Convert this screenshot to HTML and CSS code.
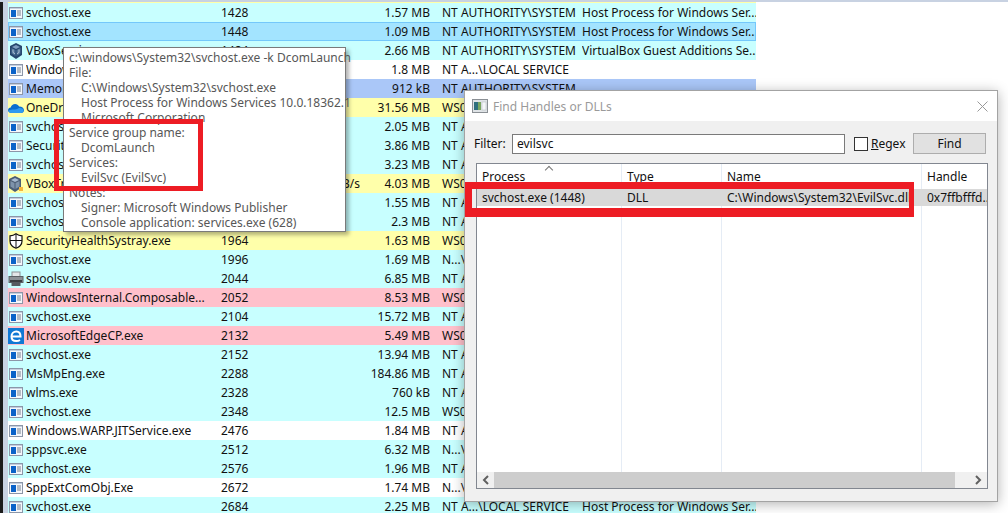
FILE: index.html
```html
<!DOCTYPE html>
<html>
<head>
  <title>Process Hacker</title>
  <link rel="stylesheet" href="styles.css">
</head>
<body>
  <svg class="defs" width="0" height="0">
    <symbol id="i-exe" viewBox="0 0 16 16">
      <rect x="1.5" y="2.5" width="13" height="11" fill="#f5f7fb" stroke="#8c96a8"/>
      <rect x="2" y="3" width="12" height="1" fill="#c3cede"/>
      <rect x="3" y="5" width="5" height="7" fill="#0b62c8"/>
      <path d="M9 6h4M9 8h4M9 10h4" stroke="#76818f"/>
    </symbol>
    <symbol id="i-vbox" viewBox="0 0 16 16">
      <path d="M8 0l6 3v9l-6 4-6-4V3z" fill="#27476f"/>
      <path d="M8 2l4 2-4 2-4-2z" fill="#7f9dbf"/>
      <path d="M3.500 5l4 2v6l-4-2.500zM12.500 5l-4 2v6l4-2.500z" fill="#4d7196"/>
      <path d="M5 6.500v3l2 1.200M11 6.500v3l-2 1.200" stroke="#c9d6e4" fill="none" stroke-width=".8"/>
    </symbol>
    <symbol id="i-tray" viewBox="0 0 16 16">
      <path d="M7 0l6 3v9l-6 4-6-4V3z" fill="#4b5d74"/>
      <path d="M7 2l4 2-4 2-4-2z" fill="#a7bad0"/>
      <path d="M2.500 5l4 2v6l-4-2.500zM11.500 5l-4 2v6l4-2.500z" fill="#7e93ab"/>
      <path d="M11 11h4v4h-4z" fill="#f6b73c"/>
    </symbol>
    <symbol id="i-cloud" viewBox="0 0 16 16">
      <path d="M3.500 13C1.500 13 0 11.800 0 10.200 0 8.700 1.200 7.600 2.700 7.500 3.300 5.300 5 4 7.100 4c1.800 0 3.200.9 4 2.400C13.800 6.300 16 8 16 10.300 16 11.900 14.800 13 13.200 13z" fill="#0a6fd0"/>
      <path d="M3.500 13C1.500 13 .5 11.800.5 10.500 4 9 8 10 10 8.500c2-1 5-.5 5.500 2C15.500 12 14.500 13 13.200 13z" fill="#2f9af0"/>
    </symbol>
    <symbol id="i-shield" viewBox="0 0 16 16">
      <path d="M8 .8c1.800 1.300 3.800 2 6 2.100v5c0 3.300-2.400 5.900-6 7.300-3.600-1.400-6-4-6-7.300v-5C4.200 2.800 6.200 2.100 8 .8z" fill="#fff" stroke="#111" stroke-width="1.200"/>
      <path d="M8 1v14M2 7.500h12" stroke="#111"/>
    </symbol>
    <symbol id="i-printer" viewBox="0 0 16 16">
      <rect x="4" y="1" width="8" height="5" fill="#e4e6e8" stroke="#8b8f94"/>
      <rect x="1" y="5.500" width="14" height="6" fill="#8d9196" stroke="#5c6064"/>
      <rect x="2" y="9" width="12" height="2" fill="#3a3d40"/>
      <rect x="3.500" y="11" width="9" height="4" fill="#555a5f"/>
    </symbol>
    <symbol id="i-edge" viewBox="0 0 16 16">
      <rect width="16" height="16" fill="#0f78d4"/>
      <path d="M4 8.500h8.500C12.500 5.500 10.800 3.500 8.300 3.500 5.500 3.500 3.500 5.800 3.500 8.500c0 2.700 2 4.500 4.800 4.500 1.500 0 2.800-.4 3.700-1" fill="none" stroke="#fff" stroke-width="2"/>
    </symbol>
    <symbol id="i-app" viewBox="0 0 16 16">
      <rect x=".5" y="1.500" width="15" height="13" fill="#dfe3e6" stroke="#8a8f94"/>
      <rect x="2" y="4" width="4" height="8" fill="#2f6f7d"/>
      <rect x="6" y="4" width="3" height="8" fill="#79a65f"/>
      <rect x="10" y="4" width="4" height="8" fill="#f4f6f8" stroke="#b0b6bc" stroke-width=".5"/>
    </symbol>
  </svg>

  <div class="topline"></div>
  <div class="page">
    <div class="gutter"></div>
    <div class="tree">
      <div class="sliver"></div>
      <div class="row service"><svg class="ico"><use href="#i-exe"/></svg><span>svchost.exe</span><span>1428</span><span class="num"></span><span class="num">1.57 MB</span><span class="user">NT AUTHORITY\SYSTEM</span><span>Host Process for Windows Ser...</span></div>
      <div class="row selected"><svg class="ico"><use href="#i-exe"/></svg><span>svchost.exe</span><span>1448</span><span class="num"></span><span class="num">1.09 MB</span><span class="user">NT AUTHORITY\SYSTEM</span><span>Host Process for Windows Ser...</span></div>
      <div class="row service"><svg class="ico"><use href="#i-vbox"/></svg><span>VBoxService.exe</span><span>1484</span><span class="num"></span><span class="num">2.66 MB</span><span class="user">NT AUTHORITY\SYSTEM</span><span>VirtualBox Guest Additions Se...</span></div>
      <div class="row"><svg class="ico"><use href="#i-exe"/></svg><span>Windows</span><span>1608</span><span class="num"></span><span class="num">1.8 MB</span><span class="user">NT A...\LOCAL SERVICE</span><span></span></div>
      <div class="row memory"><svg class="ico"><use href="#i-exe"/></svg><span>Memory Compression</span><span>1632</span><span class="num"></span><span class="num">912 kB</span><span class="user">NT AUTHORITY\SYSTEM</span><span></span></div>
      <div class="row owner"><svg class="ico"><use href="#i-cloud"/></svg><span>OneDrive.exe</span><span>1656</span><span class="num"></span><span class="num">31.56 MB</span><span class="user">WS01\user</span><span></span></div>
      <div class="row service"><svg class="ico"><use href="#i-exe"/></svg><span>svchost.exe</span><span>1688</span><span class="num"></span><span class="num">2.05 MB</span><span class="user">NT AUTHORITY\SYSTEM</span><span></span></div>
      <div class="row service"><svg class="ico"><use href="#i-exe"/></svg><span>SecurityHealthService</span><span>1712</span><span class="num"></span><span class="num">3.86 MB</span><span class="user">NT AUTHORITY\SYSTEM</span><span></span></div>
      <div class="row service"><svg class="ico"><use href="#i-exe"/></svg><span>svchost.exe</span><span>1744</span><span class="num"></span><span class="num">3.23 MB</span><span class="user">NT AUTHORITY\SYSTEM</span><span></span></div>
      <div class="row owner"><svg class="ico"><use href="#i-tray"/></svg><span>VBoxTray.exe</span><span>1788</span><span class="num">1.2 kB/s</span><span class="num">4.03 MB</span><span class="user">WS01\user</span><span></span></div>
      <div class="row service"><svg class="ico"><use href="#i-exe"/></svg><span>svchost.exe</span><span>1832</span><span class="num"></span><span class="num">1.55 MB</span><span class="user">NT AUTHORITY\SYSTEM</span><span></span></div>
      <div class="row service"><svg class="ico"><use href="#i-exe"/></svg><span>svchost.exe</span><span>1900</span><span class="num"></span><span class="num">2.3 MB</span><span class="user">NT AUTHORITY\SYSTEM</span><span></span></div>
      <div class="row owner"><svg class="ico"><use href="#i-shield"/></svg><span>SecurityHealthSystray.exe</span><span>1964</span><span class="num"></span><span class="num">1.63 MB</span><span class="user">WS01\user</span><span></span></div>
      <div class="row service"><svg class="ico"><use href="#i-exe"/></svg><span>svchost.exe</span><span>1996</span><span class="num"></span><span class="num">1.69 MB</span><span class="user">N...\LOCAL</span><span></span></div>
      <div class="row service"><svg class="ico"><use href="#i-printer"/></svg><span>spoolsv.exe</span><span>2044</span><span class="num"></span><span class="num">6.85 MB</span><span class="user">NT AUTHORITY\SYSTEM</span><span></span></div>
      <div class="row pink"><svg class="ico"><use href="#i-exe"/></svg><span>WindowsInternal.Composable...</span><span>2052</span><span class="num"></span><span class="num">8.53 MB</span><span class="user">WS01\user</span><span></span></div>
      <div class="row service"><svg class="ico"><use href="#i-exe"/></svg><span>svchost.exe</span><span>2104</span><span class="num"></span><span class="num">15.72 MB</span><span class="user">NT AUTHORITY\SYSTEM</span><span></span></div>
      <div class="row pink"><svg class="ico"><use href="#i-edge"/></svg><span>MicrosoftEdgeCP.exe</span><span>2132</span><span class="num"></span><span class="num">5.49 MB</span><span class="user">WS01\user</span><span></span></div>
      <div class="row service"><svg class="ico"><use href="#i-exe"/></svg><span>svchost.exe</span><span>2152</span><span class="num"></span><span class="num">13.94 MB</span><span class="user">NT AUTHORITY\SYSTEM</span><span></span></div>
      <div class="row service"><svg class="ico"><use href="#i-exe"/></svg><span>MsMpEng.exe</span><span>2288</span><span class="num"></span><span class="num">184.86 MB</span><span class="user">NT AUTHORITY\SYSTEM</span><span></span></div>
      <div class="row service"><svg class="ico"><use href="#i-exe"/></svg><span>wlms.exe</span><span>2328</span><span class="num"></span><span class="num">760 kB</span><span class="user">NT AUTHORITY\SYSTEM</span><span></span></div>
      <div class="row service"><svg class="ico"><use href="#i-exe"/></svg><span>svchost.exe</span><span>2348</span><span class="num"></span><span class="num">12.5 MB</span><span class="user">WS01\user</span><span></span></div>
      <div class="row"><svg class="ico"><use href="#i-exe"/></svg><span>Windows.WARP.JITService.exe</span><span>2476</span><span class="num"></span><span class="num">1.84 MB</span><span class="user">NT AUTHORITY\SYSTEM</span><span></span></div>
      <div class="row service"><svg class="ico"><use href="#i-exe"/></svg><span>sppsvc.exe</span><span>2512</span><span class="num"></span><span class="num">6.32 MB</span><span class="user">N...\NETWORK</span><span></span></div>
      <div class="row service"><svg class="ico"><use href="#i-exe"/></svg><span>svchost.exe</span><span>2576</span><span class="num"></span><span class="num">1.96 MB</span><span class="user">NT AUTHORITY\SYSTEM</span><span></span></div>
      <div class="row"><svg class="ico"><use href="#i-exe"/></svg><span>SppExtComObj.Exe</span><span>2672</span><span class="num"></span><span class="num">1.74 MB</span><span class="user">N...\NETWORK</span><span></span></div>
      <div class="row service"><svg class="ico"><use href="#i-exe"/></svg><span>svchost.exe</span><span>2684</span><span class="num"></span><span class="num">2.25 MB</span><span class="user">NT A...\LOCAL SERVICE</span><span>Host Process for Windows Ser...</span></div>
    </div>
  </div>

  <div class="tooltip">
    <div>c:\windows\System32\svchost.exe -k DcomLaunch</div>
    <div>File:</div>
    <div class="sub">C:\Windows\System32\svchost.exe</div>
    <div class="sub">Host Process for Windows Services 10.0.18362.1</div>
    <div class="sub">Microsoft Corporation</div>
    <div>Service group name:</div>
    <div class="sub">DcomLaunch</div>
    <div>Services:</div>
    <div class="sub">EvilSvc (EvilSvc)</div>
    <div>Notes:</div>
    <div class="sub">Signer: Microsoft Windows Publisher</div>
    <div class="sub">Console application: services.exe (628)</div>
  </div>
  <div class="mark mark-tip"></div>

  <div class="dialog">
    <div class="titlebar">
      <svg class="ico"><use href="#i-app"/></svg>
      <span class="title">Find Handles or DLLs</span>
      <svg class="close" width="11" height="11" viewBox="0 0 11 11"><path d="M.5.5l10 10M10.500.5l-10 10" stroke="#999" fill="none"/></svg>
    </div>
    <div class="dialog-body">
      <div class="toolbar">
        <label class="filter-label">Filter:</label>
        <div class="filter-input">evilsvc</div>
        <span class="check"></span>
        <span class="check-label"><u>R</u>egex</span>
        <button class="find">Find</button>
      </div>
      <div class="list">
        <div class="grid">
          <div class="head sorted">Process</div>
          <div class="head">Type</div>
          <div class="head">Name</div>
          <div class="head last">Handle</div>
          <div class="cell">svchost.exe (1448)</div>
          <div class="cell">DLL</div>
          <div class="cell">C:\Windows\System32\EvilSvc.dll</div>
          <div class="cell">0x7ffbfffd..</div>
          <div class="fill"></div>
          <div class="fill"></div>
          <div class="fill"></div>
          <div class="fill last"></div>
        </div>
        <div class="hscroll">
          <svg width="8" height="10" viewBox="0 0 8 10"><path d="M6 1L2 5l4 4" fill="none" stroke="#606060" stroke-width="2"/></svg>
          <div class="thumb"></div>
          <svg width="8" height="10" viewBox="0 0 8 10"><path d="M2 1l4 4-4 4" fill="none" stroke="#606060" stroke-width="2"/></svg>
        </div>
      </div>
    </div>
  </div>
  <div class="mark mark-row"></div>
</body>
</html>
```

FILE: styles.css
```css
html, body {
    margin: 0;
    padding: 0;
    height: 100%;
    overflow: hidden;
}
body {
    position: relative;
    background-color: #fff;
    color: #111;
    font-family: "Noto Sans", Arial, sans-serif;
    font-size: 12px;
}
.defs {
    position: absolute;
}
.topline {
    height: 2px;
    background-color: #c8d2e2;
}
.page {
    display: flex;
}
.gutter {
    width: 8px;
    height: 511px;
    flex: none;
    background: linear-gradient(to right, #1b1b1b 0, #1b1b1b 3px, #c8d2e2 3px);
}
.tree {
    width: 748px;
}
.sliver {
    height: 1px;
    background-color: #ffffa8;
}

/* process rows */
.row {
    display: grid;
    grid-template-columns: 18px 195px 60px 79px 70px 152px 174px;
    height: 19px;
    line-height: 19px;
    white-space: nowrap;
    box-sizing: border-box;
}
.row span {
    overflow: hidden;
}
.service {
    background-color: #c8ffff;
}
.selected {
    background-color: #a3e4ff;
    outline: 1px solid #74c8fb;
    outline-offset: -1px;
}
.memory {
    background-color: #aac7f8;
}
.owner {
    background-color: #ffffaa;
}
.pink {
    background-color: #ffc0cb;
}
.ico {
    width: 16px;
    height: 16px;
    margin-top: 2px;
}
.num {
    text-align: right;
}
.row .user {
    padding-left: 12px;
}

/* hover tooltip */
.tooltip {
    position: absolute;
    left: 63px;
    top: 47px;
    width: 283px;
    height: 185px;
    box-sizing: border-box;
    padding: 2px 5px;
    background-color: #fff;
    border: 1px solid #7a7a7a;
    box-shadow: 3px 3px 4px rgba(0, 0, 0, 0.3);
    color: #575757;
    line-height: 15px;
    white-space: nowrap;
}
.sub {
    padding-left: 12px;
}

/* red annotations */
.mark {
    position: absolute;
    box-sizing: border-box;
    border: 5px solid #ed1c24;
}
.mark-tip {
    left: 54px;
    top: 119px;
    width: 149px;
    height: 72px;
}
.mark-row {
    left: 465px;
    top: 182px;
    width: 449px;
    height: 35px;
    border-width: 7px 5px 9px 7px;
}

/* find dialog */
.dialog {
    position: absolute;
    left: 464px;
    top: 90px;
    width: 534px;
    height: 412px;
    box-sizing: border-box;
    display: flex;
    flex-direction: column;
    background-color: #f0f0f0;
    border: 1px solid #a3a3a3;
    box-shadow: 0 2px 12px rgba(0, 0, 0, 0.3);
}
.titlebar {
    height: 30px;
    flex: none;
    display: flex;
    align-items: center;
    padding: 0 9px 0 7px;
    background-color: #fff;
}
.titlebar .ico {
    margin-top: 0;
}
.title {
    margin-left: 5px;
    color: #9a9a9a;
}
.close {
    margin-left: auto;
}
.dialog-body {
    flex: 1;
    display: flex;
    flex-direction: column;
    min-height: 0;
    padding: 12px 9px 12px 9px;
}
.toolbar {
    display: flex;
    align-items: center;
    height: 21px;
    padding-right: 2px;
}
.filter-label {
    width: 38px;
}
.filter-input {
    width: 333px;
    height: 20px;
    box-sizing: border-box;
    padding-left: 4px;
    line-height: 17px;
    background-color: #fff;
    border: 1px solid #7a7a7a;
}
.check {
    width: 12px;
    height: 12px;
    margin-left: 9px;
    background-color: #fff;
    border: 1px solid #333;
}
.check-label {
    margin-left: 3px;
}
.find {
    width: 73px;
    height: 21px;
    margin-left: auto;
    padding: 0;
    background-color: #e1e1e1;
    border: 1px solid #adadad;
    color: #111;
    font-family: inherit;
    font-size: 12px;
}
.list {
    flex: 1;
    display: flex;
    flex-direction: column;
    min-height: 0;
    margin: 9px 0 0 2px;
    background-color: #fff;
    border: 1px solid #828790;
}
.grid {
    flex: 1;
    display: grid;
    grid-template-columns: 145px 100px 200px 65px;
    grid-template-rows: 25px 17px 1fr;
    min-height: 0;
}
.head {
    position: relative;
    padding: 5px 0 0 5px;
    line-height: 15px;
    border-right: 1px solid #e5ecf5;
    box-sizing: border-box;
}
.head.sorted::before {
    content: "";
    position: absolute;
    left: 69px;
    top: 3px;
    width: 5px;
    height: 5px;
    border-left: 1px solid #777;
    border-top: 1px solid #777;
    transform: rotate(45deg);
}
.cell {
    padding-left: 5px;
    line-height: 17px;
    background-color: #d9d9d9;
    white-space: nowrap;
    overflow: hidden;
}
.fill {
    border-right: 1px solid #e5ecf5;
}
.head.last, .fill.last {
    border-right: none;
}
.hscroll {
    height: 16px;
    flex: none;
    display: flex;
    align-items: center;
    padding: 0 5px;
    background-color: #f0f0f0;
}
.thumb {
    width: 461px;
    height: 16px;
    margin: 0 auto 0 4px;
    background-color: #cdcdcd;
}
```
